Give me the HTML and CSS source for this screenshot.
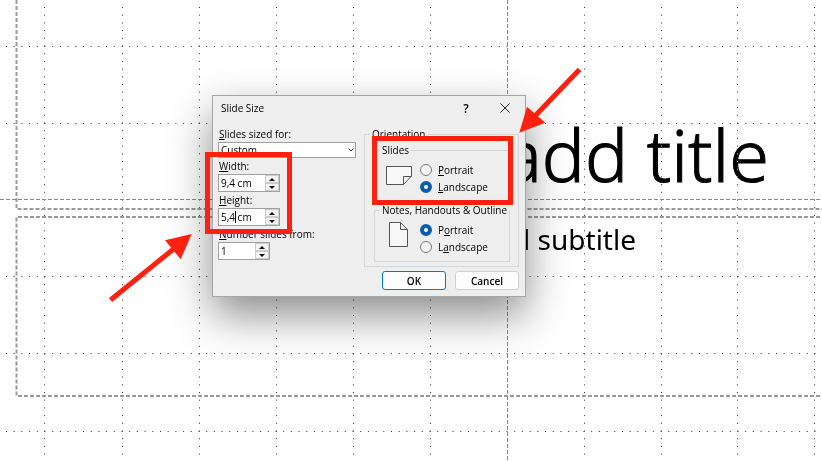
FILE: index.html
```html
<!DOCTYPE html>
<html lang="en">
<head>
<meta charset="utf-8">
<title>Slide Size</title>
<link rel="stylesheet" href="styles.css">
</head>
<body>
<main class="slide">
  <h1 class="slide-title">add title</h1>
  <p class="slide-subtitle">add subtitle</p>
  <svg class="grid" aria-hidden="true">
    <g class="dots">
      <path d="M44.5 7V2000M122.5 7V2000M199.5 7V2000M276.5 7V2000M353.5 7V2000M430.5 7V2000M584.5 7V2000M661.5 7V2000M737.5 7V2000M814.5 7V2000"/>
      <path d="M6 46.5H4000M6 123.5H4000M6 276.5H4000M6 353.5H4000M6 431.5H4000"/>
    </g>
    <path class="guide" d="M507.5 0V2000M0 199.5H4000"/>
    <path class="frame" d="M16.500 0V209H4000M4000 217H16.500V396H4000"/>
  </svg>
</main>

<form class="dialog" role="dialog" aria-labelledby="dialog-title">
  <header class="titlebar">
    <h2 id="dialog-title">Slide Size</h2>
    <button class="help" type="button" aria-label="Help">?</button>
    <button class="close" type="button" aria-label="Close"><svg width="10" height="10" viewBox="0 0 10 10"><path d="M.5.5l9 9M9.500.5l-9 9"/></svg></button>
  </header>
  <div class="content">
    <div class="sizes">
      <label for="preset"><u>S</u>lides sized for:</label>
      <div class="select-wrap">
        <select id="preset"><option>Custom</option></select>
        <svg class="chevron" width="6" height="4" viewBox="0 0 6 4"><path d="M.5.5L3 3L5.500.5"/></svg>
      </div>
      <label for="width"><u>W</u>idth:</label>
      <div class="spin">
        <input id="width" type="text" value="9,4 cm">
        <span class="steps"><button type="button" aria-label="Increase width"><i class="up"></i></button><button type="button" aria-label="Decrease width"><i class="down"></i></button></span>
      </div>
      <label for="height"><u>H</u>eight:</label>
      <div class="spin">
        <input id="height" type="text" value="5,4 cm"><span class="caret"></span>
        <span class="steps"><button type="button" aria-label="Increase height"><i class="up"></i></button><button type="button" aria-label="Decrease height"><i class="down"></i></button></span>
      </div>
      <label for="first"><u>N</u>umber slides from:</label>
      <div class="spin narrow">
        <input id="first" type="text" value="1">
        <span class="steps"><button type="button" aria-label="Increase number"><i class="up"></i></button><button type="button" aria-label="Decrease number"><i class="down"></i></button></span>
      </div>
    </div>
    <div class="side">
      <fieldset class="orientation">
        <legend>Orientation</legend>
        <fieldset class="group">
          <legend>Slides</legend>
          <svg class="page" width="26" height="26" viewBox="0 0 26 26"><path d="M.5 4.500H25.500V14L17.500 22.500H.5ZM17.500 22.500V14.500H25.500"/></svg>
          <div class="choices">
            <label><input type="radio" name="slides"><span><u>P</u>ortrait</span></label>
            <label><input type="radio" name="slides" checked><span><u>L</u>andscape</span></label>
          </div>
        </fieldset>
        <fieldset class="group">
          <legend>Notes, Handouts &amp; Outline</legend>
          <svg class="page" width="26" height="26" viewBox="0 0 26 26"><path d="M3.500.5H14.500L21.500 7.500V24.500H3.500ZM14.500.5V7.500H21.500"/></svg>
          <div class="choices">
            <label><input type="radio" name="notes" checked><span>P<u>o</u>rtrait</span></label>
            <label><input type="radio" name="notes"><span>L<u>a</u>ndscape</span></label>
          </div>
        </fieldset>
      </fieldset>
      <div class="actions">
        <button class="btn primary" type="submit">OK</button>
        <button class="btn" type="button">Cancel</button>
      </div>
    </div>
  </div>
</form>

<svg class="marks" width="822" height="461" viewBox="0 0 822 461" aria-hidden="true">
  <rect x="207.500" y="154.500" width="82" height="77"/>
  <rect x="374.500" y="138.500" width="136" height="64"/>
  <path class="shaft" d="M110.500 300L176 247M579.500 69.500L533 118"/>
  <path class="head" d="M191.700 234L165 240.300L180.700 259.300ZM519.300 132.700L527 106.700L545.300 122.700Z"/>
</svg>
</body>
</html>
```
FILE: styles.css
```css
* { box-sizing: border-box; }

body {
  margin: 0;
  background: #fff;
  color: #000;
  font-family: "Open Sans", "Noto Sans", sans-serif;
}

/* Slide canvas */
.slide {
  position: relative;
  min-height: 100vh;
  overflow: hidden;
  padding: 106px 0 0 16px;
}

.slide-title,
.slide-subtitle {
  margin: 0;
  text-align: right;
  white-space: nowrap;
  color: #000;
  font-family: "Noto Sans", sans-serif;
}

.slide-title {
  width: 753px;
  font-size: 72px;
  line-height: 96px;
  font-weight: 300;
  -webkit-text-stroke: 1px #000;
}

.slide-subtitle {
  width: 620px;
  margin-top: 18px;
  font-size: 28px;
  line-height: 38px;
}

.grid {
  position: absolute;
  inset: 0;
  width: 100%;
  height: 100%;
  fill: none;
  mix-blend-mode: difference;
}

.dots { stroke: #ccc; stroke-width: 1; stroke-dasharray: 1 6.7; }
.guide { stroke: #777; stroke-width: 1; stroke-dasharray: 4 2; }
.frame { stroke: #666; stroke-width: 2; stroke-dasharray: 4 2; }

/* Dialog window */
.dialog {
  position: absolute;
  left: 212px;
  top: 95px;
  width: 314px;
  border: 1px solid #a6a6a6;
  background: #eee;
  box-shadow: 0 18px 40px rgba(0, 0, 0, .45);
  font-size: 10px;
  font-weight: 500;
}

.titlebar {
  display: flex;
  align-items: center;
  height: 24px;
  padding: 0 8px;
}

.titlebar h2 {
  flex: 1;
  margin: 0;
  font-size: 10px;
  font-weight: 400;
}

button { font: inherit; color: inherit; padding: 0; }

.help, .close {
  display: grid;
  place-items: center;
  width: 24px;
  height: 24px;
  border: 0;
  background: none;
}

.help { margin-right: 15px; font-size: 12px; font-weight: 600; }
.close svg { fill: none; stroke: #222; }

.content {
  display: flex;
  justify-content: space-between;
  padding: 6px 6px 6px 5px;
}

.sizes { width: 138px; }

.sizes label {
  display: block;
  height: 16px;
  line-height: 16px;
  padding-left: 1px;
}

u { text-underline-offset: 1px; text-decoration-thickness: 1px; }

.select-wrap { position: relative; height: 16px; }

select {
  display: block;
  width: 100%;
  height: 16px;
  padding: 0 2px;
  border: 1px solid #a0a0a0;
  border-radius: 0;
  background: #fff;
  color: inherit;
  font: inherit;
  appearance: none;
}

.chevron {
  position: absolute;
  right: 2px;
  top: 6px;
  fill: none;
  stroke: #333;
}

.spin {
  position: relative;
  display: flex;
  width: 62px;
  height: 18px;
  border: 1px solid #a0a0a0;
  background: #fff;
}

.spin.narrow { width: 52px; }

.spin input {
  flex: 1;
  min-width: 0;
  padding: 0 2px;
  border: 0;
  background: none;
  color: inherit;
  font: inherit;
}

.caret {
  position: absolute;
  left: 16px;
  top: 2px;
  width: 1px;
  height: 12px;
  background: #000;
}

.steps {
  display: grid;
  grid-template-rows: 1fr 1fr;
  width: 14px;
}

.steps button {
  display: grid;
  place-items: center;
  border: 1px solid #ccc;
  background: #f4f4f4;
}

.up, .down {
  border: 3px solid transparent;
}

.up { border-top: 0; border-bottom: 3px solid #111; }
.down { border-bottom: 0; border-top: 3px solid #111; }

.side { width: 155px; }

fieldset { min-width: 0; margin: 0; border: 1px solid #d6d6d6; }
legend { padding: 0 2px; line-height: 16px; }

.orientation { height: 141px; padding: 0 8px 6px 9px; }
.orientation > legend { margin-left: -4px; }

.group {
  display: grid;
  grid-template-columns: 26px 1fr;
  align-items: center;
  gap: 8px;
  height: 60px;
  padding: 0 4px 2px 11px;
}

.group > legend { margin-left: -6px; white-space: nowrap; }

.page { margin-bottom: 8px; fill: #f8f8f8; stroke: #555; }

.choices label {
  display: flex;
  align-items: center;
  gap: 6px;
  height: 17px;
}

.choices input {
  width: 12px;
  height: 12px;
  margin: 0;
  border: 1px solid #777;
  border-radius: 50%;
  background: #f4f4f4;
  appearance: none;
}

.choices input:checked {
  border: 4px solid #0a5cad;
  background: #fff;
}

.actions {
  display: flex;
  justify-content: flex-end;
  gap: 9px;
  margin-top: 4px;
}

.btn {
  width: 64px;
  height: 19px;
  border: 1px solid #d0d0d0;
  border-radius: 3px;
  background: #fdfdfd;
  font-weight: 600;
}

.btn.primary { border-color: #0078d4; }

/* Callout boxes and arrows */
.marks {
  position: absolute;
  left: 0;
  top: 0;
  pointer-events: none;
  fill: none;
  stroke: #ff2010;
  stroke-width: 5;
}

.marks .head { fill: #ff2010; stroke: none; }
```
